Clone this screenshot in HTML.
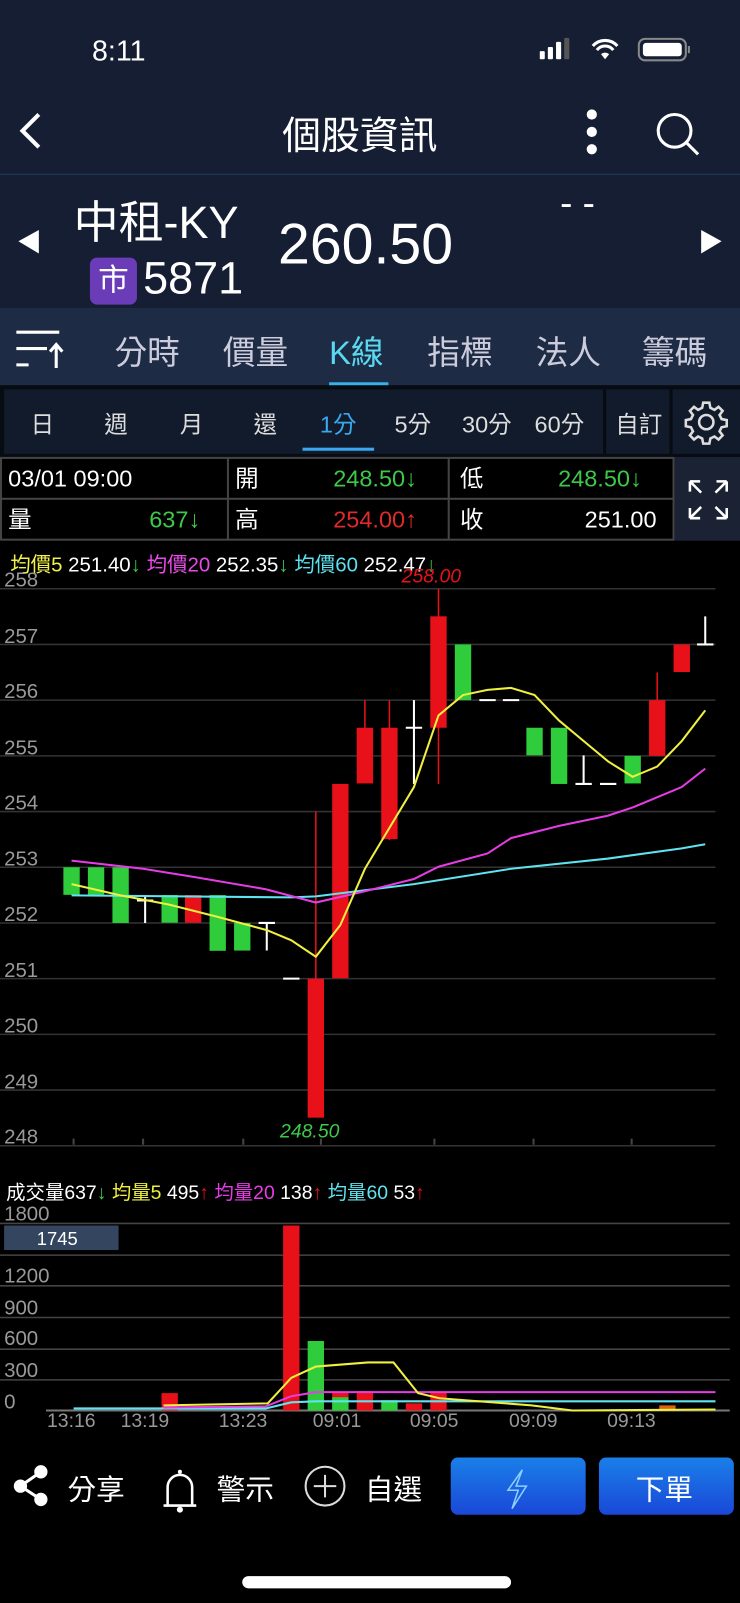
<!DOCTYPE html>
<html><head><meta charset="utf-8"><style>
html,body{margin:0;padding:0;background:#000;width:740px;height:1602px;overflow:hidden}
#w{position:absolute;left:0;top:0;width:724px;height:1568px;transform:scale(1.0221);transform-origin:0 0;font-family:"Liberation Sans","Noto Sans CJK TC",sans-serif;color:#fff}
.a{position:absolute;white-space:nowrap}
.t span{position:absolute;line-height:38px;height:38px;white-space:nowrap}
</style></head><body><div id="w">
<div class="a" style="left:0;top:0;width:724px;height:170px;background:#151e33"></div>
<div class="a" style="left:0;top:170px;width:724px;height:1px;background:#2a4a6a"></div>
<div class="a" style="left:0;top:171px;width:724px;height:130px;background:#151e33"></div>
<div class="a" style="left:90px;top:34px;font-size:28px;font-weight:500">8:11</div>
<svg class="a" style="left:528px;top:36px" width="180" height="26">
<rect x="0" y="14" width="5" height="8" rx="1" fill="#fff"/><rect x="8" y="10" width="5" height="12" rx="1" fill="#fff"/><rect x="16" y="5" width="5" height="17" rx="1" fill="#fff"/><rect x="24" y="1" width="5" height="21" rx="1" fill="#555"/>
<path d="M52 9a16 16 0 0 1 24 0M56 13a10 10 0 0 1 16 0" stroke="#fff" stroke-width="3" fill="none"/><path d="M60 17l4 5 4-5a6 6 0 0 0-8 0z" fill="#fff"/>
<rect x="97" y="2" width="46" height="21" rx="6" fill="none" stroke="#888" stroke-width="2"/><rect x="101" y="6" width="38" height="13" rx="3" fill="#fff"/><rect x="145" y="9" width="2" height="7" fill="#888"/></svg>
<svg class="a" style="left:14px;top:108px" width="30" height="40"><path d="M24 4L8 20l16 16" stroke="#fff" stroke-width="4" fill="none"/></svg>
<div class="a" style="left:276px;top:102px;font-size:38px">個股資訊</div>
<svg class="a" style="left:566px;top:104px" width="130" height="50"><circle cx="13" cy="8" r="5" fill="#fff"/><circle cx="13" cy="25" r="5" fill="#fff"/><circle cx="13" cy="42" r="5" fill="#fff"/><circle cx="94" cy="24" r="16" stroke="#fff" stroke-width="3" fill="none"/><path d="M106 36l11 11" stroke="#fff" stroke-width="3"/></svg>
<svg class="a" style="left:14px;top:222px" width="30" height="30"><path d="M4 14L24 3v23z" fill="#fff"/></svg>
<svg class="a" style="left:682px;top:222px" width="30" height="30"><path d="M24 14L4 3v23z" fill="#fff"/></svg>
<div class="a" style="left:72px;top:182px;font-size:44px">中租-KY</div>
<div class="a" style="left:88px;top:252px;width:46px;height:46px;background:#6a3cb8;border-radius:7px;font-size:30px;text-align:center;line-height:46px">市</div>
<div class="a" style="left:140px;top:248px;font-size:44px">5871</div>
<div class="a" style="left:272px;top:206px;font-size:56px">260.50</div>
<div class="a" style="left:548px;top:178px;font-size:36px">- -</div>
<div class="a" style="left:0;top:301px;width:724px;height:76px;background:#1e2b45"></div>
<svg class="a" style="left:14px;top:322px" width="50" height="40"><path d="M2 3h42M2 19h30M2 35h12" stroke="#fff" stroke-width="3"/><path d="M41 38V16M35 22l6-7 6 7" stroke="#fff" stroke-width="3" fill="none"/></svg>
<div class="a" style="left:112px;top:320px;font-size:32px;color:#ccd">分時</div>
<div class="a" style="left:218px;top:320px;font-size:32px;color:#ccd">價量</div>
<div class="a" style="left:322px;top:320px;font-size:32px;color:#5ad8f0">K線</div>
<div class="a" style="left:418px;top:320px;font-size:32px;color:#ccd">指標</div>
<div class="a" style="left:524px;top:320px;font-size:32px;color:#ccd">法人</div>
<div class="a" style="left:628px;top:320px;font-size:32px;color:#ccd">籌碼</div>
<div class="a" style="left:322px;top:374px;width:58px;height:3px;background:#3ab0e8"></div>
<div class="a" style="left:0;top:377px;width:724px;height:70px;background:#070b12"></div>
<div class="a" style="left:4px;top:381px;width:586px;height:63px;background:#121b2b"></div>
<div class="a" style="left:593px;top:381px;width:62px;height:63px;background:#121b2b"></div>
<div class="a" style="left:658px;top:381px;width:66px;height:63px;background:#121b2b"></div>
<div class="a" style="left:0;top:396px;width:724px;font-size:23px;color:#ddd">
<span class="a" style="left:30px">日</span><span class="a" style="left:102px">週</span><span class="a" style="left:176px">月</span><span class="a" style="left:248px">還</span><span class="a" style="left:313px;color:#3aa8f0">1分</span><span class="a" style="left:386px">5分</span><span class="a" style="left:452px">30分</span><span class="a" style="left:523px">60分</span><span class="a" style="left:602px">自訂</span></div>
<div class="a" style="left:296px;top:438px;width:70px;height:3px;background:#3aa8f0"></div>
<svg class="a" style="left:668px;top:390px" width="46" height="46"><g fill="none" stroke="#ddd" stroke-width="2.5"><circle cx="23" cy="23" r="7"/><path d="M20 4h6l1 5 4 2 4-3 4 4-3 4 2 4 5 1v6l-5 1-2 4 3 4-4 4-4-3-4 2-1 5h-6l-1-5-4-2-4 3-4-4 3-4-2-4-5-1v-6l5-1 2-4-3-4 4-4 4 3 4-2z"/></g></svg>
<div class="a" style="left:0;top:447px;width:660px;height:82px;background:#444"></div>
<div class="a" style="left:2px;top:449px;width:220px;height:38px;background:#000"></div>
<div class="a" style="left:224px;top:449px;width:214px;height:38px;background:#000"></div>
<div class="a" style="left:440px;top:449px;width:218px;height:38px;background:#000"></div>
<div class="a" style="left:2px;top:489px;width:220px;height:38px;background:#000"></div>
<div class="a" style="left:224px;top:489px;width:214px;height:38px;background:#000"></div>
<div class="a" style="left:440px;top:489px;width:218px;height:38px;background:#000"></div>
<div class="a" style="left:660px;top:447px;width:64px;height:82px;background:#1a2233"></div>
<div class="t" style="font-size:23px">
<span style="left:8px;top:449px">03/01 09:00</span>
<span style="left:230px;top:449px">開</span><span style="left:326px;top:449px;color:#3ec84a">248.50↓</span>
<span style="left:450px;top:449px">低</span><span style="left:546px;top:449px;color:#3ec84a">248.50↓</span>
<span style="left:8px;top:489px">量</span><span style="left:146px;top:489px;color:#3ec84a">637↓</span>
<span style="left:230px;top:489px">高</span><span style="left:326px;top:489px;color:#e02a2a">254.00↑</span>
<span style="left:450px;top:489px">收</span><span style="left:572px;top:489px">251.00</span></div>
<svg class="a" style="left:672px;top:468px" width="42" height="42"><g stroke="#fff" stroke-width="2.5" fill="none"><path d="M3 3l11 11M3 3v10M3 3h10M39 3L28 14M39 3v10M39 3H29M3 39l11-11M3 39V29M3 39h10M39 39L28 28M39 39V29M39 39H29"/></g></svg>
<div class="a" style="left:10px;top:536px;font-size:20px"><span style="color:#f2f24a">均價5</span> 251.40<span style="color:#3ec84a">↓</span> <span style="color:#e84ae8">均價20</span> 252.35<span style="color:#3ec84a">↓</span> <span style="color:#5ae0ee">均價60</span> 252.47<span style="color:#3ec84a">↓</span></div>
<svg class="a" style="left:0;top:0" width="724" height="1568">
<g stroke="#333" stroke-width="1.5">
<path d="M0 576H700M0 630.5H700M0 685H700M0 739.5H700M0 794H700M0 848.5H700M0 903H700M0 957.5H700M0 1012H700M0 1066.5H700M0 1121H700"/>
</g>
<g fill="#999" font-size="20" font-family="Liberation Sans">
<text x="4" y="574">258</text><text x="4" y="629">257</text><text x="4" y="683">256</text><text x="4" y="738">255</text><text x="4" y="792">254</text><text x="4" y="847">253</text><text x="4" y="901">252</text><text x="4" y="956">251</text><text x="4" y="1010">250</text><text x="4" y="1065">249</text><text x="4" y="1119">248</text></g>
<g fill="#2fcc3c">
<rect x="62" y="848.5" width="16" height="27"/><rect x="86" y="848.5" width="16" height="27"/><rect x="110" y="848.5" width="16" height="54.5"/><rect x="158" y="875.75" width="16" height="27"/><rect x="205" y="875.75" width="16" height="54.5"/><rect x="229" y="903" width="16" height="27"/><rect x="445" y="630.5" width="16" height="54.5"/><rect x="515" y="712" width="16" height="27"/><rect x="539" y="712" width="16" height="55"/><rect x="611" y="739.5" width="16" height="27"/></g>
<g stroke="#e8111a" stroke-width="1.5"><path d="M309 794V958M381 685V822M357 685V712M429 576V767M643 658V685"/></g>
<g fill="#e8111a">
<rect x="181" y="875.75" width="16" height="27"/><rect x="301" y="957.5" width="16" height="136"/><rect x="325" y="767" width="16" height="190"/><rect x="349" y="712" width="16" height="54.5"/><rect x="373" y="712" width="16" height="109"/><rect x="421" y="603" width="16" height="109"/><rect x="635" y="685" width="16" height="54.5"/><rect x="659" y="630.5" width="16" height="27"/></g>
<g stroke="#fff" stroke-width="2"><path d="M134 881h16M142 876v27M253 903h16M261 903v27M277 957.5h16M397 712h16M405 685v82M469 685h16M492 685h16M563 767h16M571 739v28M587 767h16M682 630.5h16M690 603v28"/></g>
<g fill="none" stroke-width="2">
<polyline stroke="#5fe3f0" points="70,876 285,878 309,877 405,865 500,850 595,840 667,830 690,826"/>
<polyline stroke="#e63ce6" points="70,842 140,850 190,858 260,870 309,883 357,872 405,860 429,848 477,835 500,820 547,808 595,798 619,790 667,770 690,752"/>
<polyline stroke="#f0f040" points="70,865 118,876 165,885 213,897 261,910 285,920 309,936 333,905 357,850 381,810 405,770 429,700 453,680 477,675 500,673 523,680 547,705 571,725 595,745 619,760 643,750 667,725 690,695"/></g>
<text x="393" y="570" fill="#e8111a" font-size="19" font-style="italic" font-family="Liberation Sans">258.00</text>
<text x="274" y="1113" fill="#3ec84a" font-size="19" font-style="italic" font-family="Liberation Sans">248.50</text>
<g stroke="#444" stroke-width="2"><path d="M72 1114v6M140 1114v6M238 1114v6M314 1114v6M425 1114v6M522 1114v6M618 1114v6"/></g>
<g font-size="19" font-family="Liberation Sans,Noto Sans CJK TC,sans-serif" fill="#fff">
<text x="6" y="1173">成交量637<tspan fill="#3ec84a">↓</tspan> <tspan fill="#f0f040">均量5</tspan> 495<tspan fill="#e8111a">↑</tspan> <tspan fill="#e63ce6">均量20</tspan> 138<tspan fill="#e8111a">↑</tspan> <tspan fill="#5fe3f0">均量60</tspan> 53<tspan fill="#e8111a">↑</tspan></text></g>
<g stroke="#444" stroke-width="1.5"><path d="M0 1197H714M0 1228H714M0 1258H714M0 1289H714M0 1320H714M0 1350H714"/></g>
<path d="M45 1380H714" stroke="#777" stroke-width="2"/>
<g fill="#999" font-size="20" font-family="Liberation Sans"><text x="4" y="1194">1800</text><text x="4" y="1255">1200</text><text x="4" y="1286">900</text><text x="4" y="1316">600</text><text x="4" y="1347">300</text><text x="4" y="1378">0</text></g>
<rect x="4" y="1199" width="112" height="24" fill="#34455f"/><text x="36" y="1218" fill="#fff" font-size="18" font-family="Liberation Sans">1745</text>
<g fill="#e8111a"><rect x="158" y="1363" width="16" height="17"/><rect x="277" y="1199" width="16" height="181"/><rect x="325" y="1362" width="16" height="18"/><rect x="349" y="1361" width="16" height="19"/><rect x="397" y="1373" width="16" height="7"/><rect x="421" y="1362" width="16" height="18"/><rect x="645" y="1375" width="16" height="5" fill="#e06010"/></g>
<g fill="#2fcc3c"><rect x="301" y="1312" width="16" height="68"/><rect x="325" y="1367" width="16" height="13"/><rect x="373" y="1370" width="16" height="10"/></g>
<g fill="none" stroke-width="2">
<polyline stroke="#5fe3f0" points="72,1378 260,1378 285,1372 309,1371 700,1371"/>
<polyline stroke="#e63ce6" points="160,1377 260,1376 285,1366 309,1362 400,1362 700,1362"/>
<polyline stroke="#f0f040" points="160,1375 262,1373 285,1348 309,1337 360,1333 385,1333 409,1363 430,1368 520,1375 560,1380 700,1379"/></g>
<g fill="#999" font-size="19" font-family="Liberation Sans"><text x="46" y="1396">13:16</text><text x="118" y="1396">13:19</text><text x="214" y="1396">13:23</text><text x="306" y="1396">09:01</text><text x="401" y="1396">09:05</text><text x="498" y="1396">09:09</text><text x="594" y="1396">09:13</text></g>
<g stroke="#fff" stroke-width="3" fill="#fff"><path d="M40 1440L20 1454L40 1467" fill="none"/><circle cx="40" cy="1440" r="5"/><circle cx="20" cy="1454" r="5"/><circle cx="40" cy="1467" r="5"/></g>
<path d="M160 1473h32M164 1473v-18a12 12 0 0 1 24 0v18" stroke="#fff" stroke-width="2.5" fill="none"/><circle cx="176" cy="1477" r="3" fill="#fff"/><circle cx="176" cy="1440" r="2" fill="#fff"/>
<circle cx="318" cy="1454" r="19" stroke="#ddd" stroke-width="2" fill="none"/><path d="M318 1443v22M307 1454h22" stroke="#ddd" stroke-width="2"/>
<defs><linearGradient id="g" x1="0" y1="0" x2="0" y2="1"><stop offset="0" stop-color="#1a7fe8"/><stop offset="1" stop-color="#1a48d8"/></linearGradient></defs>
<rect x="441" y="1426" width="132" height="56" rx="7" fill="url(#g)"/>
<rect x="586" y="1426" width="132" height="56" rx="7" fill="url(#g)"/>
<path d="M511 1438l-14 20h10l-6 18 14-22h-10z" stroke="#8fd0ff" stroke-width="1.5" fill="none"/>
<rect x="237" y="1542" width="263" height="12" rx="6" fill="#fff"/>
</svg>
<div class="a" style="left:66px;top:1436px;font-size:28px">分享</div>
<div class="a" style="left:212px;top:1436px;font-size:28px">警示</div>
<div class="a" style="left:357px;top:1436px;font-size:28px">自選</div>
<div class="a" style="left:622px;top:1436px;font-size:28px">下單</div>
</div></body></html>
